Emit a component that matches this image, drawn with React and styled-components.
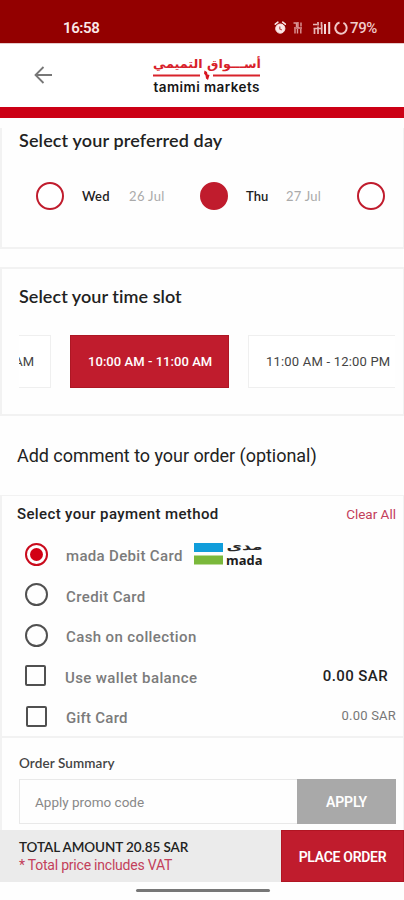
import React from "react";
import styled, { createGlobalStyle } from "styled-components";

const Global = createGlobalStyle`
  *{box-sizing:border-box}
  html,body{margin:0;padding:0;background:#fefefe}
  body{width:404px;height:900px;overflow:hidden;font-family:Roboto,"Liberation Sans",sans-serif}
  button{border:0;padding:0;margin:0;cursor:pointer}
`;

const Screen = styled.main`
  width: 404px;
  height: 900px;
  display: flex;
  flex-direction: column;
  overflow: hidden;
`;
const Label = styled.span`
  display: block;
  white-space: nowrap;
  font-family: ${(p) => (p.$lato ? 'Lato, "Liberation Sans", sans-serif' : 'Roboto, "Liberation Sans", sans-serif')};
  font-size: ${(p) => p.$size || 15}px;
  font-weight: ${(p) => p.$weight || 400};
  font-variant-ligatures: none;
  line-height: ${(p) => p.$lh || 20}px;
  color: ${(p) => p.$color || "#222"};
  letter-spacing: ${(p) => p.$ls || 0}px;
`;
const StatusBar = styled.header`
  flex: 0 0 43px;
  background: #930000;
  display: flex;
  justify-content: space-between;
  align-items: flex-start;
  padding: 18px 27px 0 63px;
`;
const StatusIcons = styled.div`
  display: flex;
  align-items: center;
`;
const AppBar = styled.nav`
  flex: 0 0 64px;
  background: #fff;
  display: flex;
  align-items: flex-start;
  padding: 11px 0 0 33px;
  border-top: 1px solid #e5caca;
`;
const BackButton = styled.button`
  width: 20px;
  height: 40px;
  background: none;
  display: flex;
  align-items: center;
`;
const BrandLogo = styled.svg`
  margin-left: 98px;
  display: block;
`;
const CardLogo = styled.svg`
  display: block;
  overflow: visible;
`;
const Strip = styled.div`
  flex: 0 0 11px;
  background: #cc0015;
`;
const Card = styled.section`
  flex: 0 0 ${(p) => p.$h}px;
  margin-top: ${(p) => p.$gap || 0}px;
  border: solid #f2f2f2;
  border-width: ${(p) => p.$bw || "2px 1px 2px 2px"};
  background: #fefefe;
  overflow: hidden;
`;
const CardTitle = styled.div`
  padding: ${(p) => p.$top}px 0 0 17px;
`;
const DayRow = styled.div`
  display: grid;
  grid-template-columns: 46px 47px 71px 46px 40px 71px 28px;
  align-items: center;
  height: 28px;
  padding-left: 34px;
  margin-top: 32px;
`;
const DayDot = styled.span`
  width: 28px;
  height: 28px;
  border-radius: 50%;
  border: 2px solid #c01c2d;
  background: ${(p) => (p.$on ? "#c01c2d" : "#fff")};
`;
const SlotRow = styled.div`
  display: flex;
  margin: 29px 8px 0 17px;
  height: 53px;
  gap: 19px;
  overflow: hidden;
`;
const Slot = styled.button`
  flex: 0 0 ${(p) => p.$w}px;
  border: 1px solid ${(p) => (p.$on ? "#ad1724" : "#efefef")};
  border-left-width: ${(p) => (p.$cut ? 0 : 1)}px;
  background: ${(p) => (p.$on ? "#c01c2d" : "#fff")};
  overflow: hidden;
  display: flex;
  align-items: center;
  justify-content: ${(p) => (p.$cut ? "flex-end" : "flex-start")};
  padding: 1px ${(p) => (p.$cut ? 16 : 0)}px 0 ${(p) => (p.$cut ? 0 : 17)}px;
`;
const CommentTitle = styled.div`
  flex: 0 0 79px;
  display: flex;
  align-items: center;
  padding-left: 17px;
`;
const PayHead = styled.div`
  display: flex;
  justify-content: space-between;
  padding: 8px 7px 0 15px;
  height: 38px;
`;
const PayRow = styled.label`
  display: grid;
  grid-template-columns: ${(p) => p.$col || 41}px auto 1fr;
  align-items: center;
  height: 40.5px;
  padding: 0 ${(p) => p.$right || 7}px 0 23px;
`;
const PayLabel = styled.div`
  padding-top: 4px;
`;
const PayEnd = styled.div`
  justify-self: ${(p) => (p.$start ? "start" : "end")};
  padding-left: ${(p) => (p.$start ? 11 : 0)}px;
`;
const Radio = styled.span`
  width: 23px;
  height: 23px;
  border-radius: 50%;
  border: 2px solid ${(p) => (p.$on ? "#c90a1c" : "#505050")};
  display: grid;
  place-items: center;
  &::after {
    content: "";
    width: 13px;
    height: 13px;
    border-radius: 50%;
    background: ${(p) => (p.$on ? "#d20014" : "transparent")};
  }
`;
const Checkbox = styled.span`
  width: 21px;
  height: 21px;
  margin-left: ${(p) => p.$inset || 0}px;
  border-radius: 2px;
  border: 2px solid #505050;
`;
const Promo = styled.div`
  display: flex;
  height: 45px;
  margin: 6px 7px 0 17px;
`;
const PromoField = styled.div`
  flex: 1;
  border: 1px solid #e9e9e9;
  border-right: 0;
  display: flex;
  align-items: center;
  padding-left: 15px;
`;
const ApplyButton = styled.button`
  width: 99px;
  background: #a9a9a9;
  display: grid;
  place-items: center;
`;
const Footer = styled.footer`
  flex: 0 0 52px;
  display: flex;
  background: #ebebeb;
`;
const Total = styled.div`
  flex: 1;
  padding: 8px 0 0 19px;
`;
const OrderButton = styled.button`
  width: 123px;
  background: #c01c2d;
  border: 1px solid #b01522;
  display: grid;
  place-items: center;
  padding-top: 2px;
`;
const HomeBar = styled.div`
  flex: 0 0 3px;
  width: 134px;
  margin: 7px 0 0 136px;
  border-radius: 2px;
  background: #777;
`;

const StatusGlyphs = () => (
  <svg width="76" height="16" viewBox="274 20 76 16" fill="none">
    <circle cx="280.3" cy="28.6" r="4.600" fill="#fbe6e6" stroke="#fbe6e6" />
    <path d="M275.3 24.2l2.6-2M285.3 24.2l-2.6-2" stroke="#fbe6e6" strokeWidth="1.6" strokeLinecap="round" />
    <path d="M279.800 26.500v2.500l2 1" stroke="#b84848" strokeWidth="1.2" />
    <path d="M293.500 23h3v4M298 22v6M301 22.500v4M295 29v4.500M297.500 29v4.500M300.800 29v4.500M294 28h8" stroke="#dc9898" strokeWidth="1.400" />
    <path d="M313 24.500h4M318 22v3.500M321.500 22v4M313.500 28.500h8M314.500 29v5M318 26.500v7.500M321.700 25v9" stroke="#e6b5b5" strokeWidth="1.700" />
    <path d="M325 24v10M329.200 22v12" stroke="#f5dada" strokeWidth="2" />
    <circle cx="341" cy="28" r="5.700" stroke="#f0c6c6" strokeWidth="2" strokeDasharray="31 5" transform="rotate(-65 341 28)" />
  </svg>
);

const TamimiLogo = () => (
  <BrandLogo width="112" height="42" viewBox="151 55 112 42">
    <text x="261" y="67.500" direction="rtl" textLength="108" lengthAdjust="spacingAndGlyphs" fontFamily="DejaVu Sans, sans-serif" fontWeight="700" fontSize="12" fill="#d8202a">أســـواق التميمي</text>
    <path d="M153 75.500h47M213 75.500h47" stroke="#d8232b" strokeWidth="1.800" />
    <path d="M204.500 70.500l2.500 1.500 .5 2.500 2 .5-1.500 5-2-1.500-.5-3-1.500-2z" fill="#d8151f" />
    <text x="153.500" y="91.500" textLength="106" lengthAdjust="spacing" fontFamily="Inter, sans-serif" fontWeight="600" fontSize="13.500" fill="#161616">tamimi markets</text>
  </BrandLogo>
);

const MadaLogo = () => (
  <CardLogo width="70" height="26" viewBox="194 541 70 26">
    <path d="M194 543h29v9h-29z" fill="#109ddb" />
    <path d="M194 555.500h29v9h-29z" fill="#7ab83b" />
    <text x="262.500" y="549.500" direction="rtl" textLength="36" lengthAdjust="spacingAndGlyphs" fontFamily="DejaVu Sans, sans-serif" fontWeight="700" fontSize="10.500" fill="#292929">مدى</text>
    <text x="226" y="564.500" textLength="36.500" lengthAdjust="spacingAndGlyphs" fontFamily="Open Sans, sans-serif" fontWeight="700" fontSize="13" fill="#1c1c1c">mada</text>
  </CardLogo>
);

const Pay = ({ text, box, on, col, inset, right, children, start, ls = 0.38 }) => (
  <PayRow $col={col} $right={right}>
    {box ? <Checkbox $inset={inset} /> : <Radio $on={on} />}
    <PayLabel><Label $size={15} $weight={500} $color="#7b7b7b" $ls={ls}>{text}</Label></PayLabel>
    {children && <PayEnd $start={start}>{children}</PayEnd>}
  </PayRow>
);

export default function App() {
  return (
    <Screen>
      <Global />
      <StatusBar>
        <Label $size={15} $weight={600} $color="#fbe9e9" $ls={-0.4}>16:58</Label>
        <StatusIcons>
          <StatusGlyphs />
          <Label $size={15} $weight={500} $color="#f0cccc" $ls={-0.4}>79%</Label>
        </StatusIcons>
      </StatusBar>
      <AppBar>
        <BackButton aria-label="Back">
          <svg width="20" height="18" viewBox="0 0 20 18" fill="none" stroke="#777" strokeWidth="1.800"><path d="M19 9H3M10.500 1L2.500 9l8 8" /></svg>
        </BackButton>
        <TamimiLogo />
      </AppBar>
      <Strip />

      <Card $h={121} $gap={10} $bw="0 1px 2px 2px">
        <CardTitle $top={2}><Label $lato $size={18} $weight={600} $ls={0.14}>Select your preferred day</Label></CardTitle>
        <DayRow>
          <DayDot />
          <Label $lato $size={13} $weight={600} $ls={0.3}>Wed</Label>
          <Label $lato $size={13} $color="#aaa" $ls={0.35}>26 Jul</Label>
          <DayDot $on />
          <Label $lato $size={13} $weight={600} $ls={0.1}>Thu</Label>
          <Label $lato $size={13} $color="#aaa" $ls={0.25}>27 Jul</Label>
          <DayDot />
        </DayRow>
      </Card>

      <Card $h={149} $gap={18}>
        <CardTitle $top={17}><Label $lato $size={18} $weight={600} $ls={0.05}>Select your time slot</Label></CardTitle>
        <SlotRow>
          <Slot $w={32} $cut><Label $size={13} $color="#444">AM</Label></Slot>
          <Slot $w={159} $on><Label $size={13} $weight={500} $color="#fff" $ls={0.05}>10:00 AM - 11:00 AM</Label></Slot>
          <Slot $w={160}><Label $size={13} $color="#444" $ls={0.2}>11:00 AM - 12:00 PM</Label></Slot>
        </SlotRow>
      </Card>

      <CommentTitle><Label $size={18} $ls={-0.04}>Add comment to your order (optional)</Label></CommentTitle>

      <Card $h={243} $bw="1px 1px 2px 2px">
        <PayHead>
          <Label $size={15} $weight={500} $ls={0.37}>Select your payment method</Label>
          <Label $size={13.5} $color="#c3405a">Clear All</Label>
        </PayHead>
        <Pay text="mada Debit Card" on start ls={0.33}><MadaLogo /></Pay>
        <Pay text="Credit Card" />
        <Pay text="Cash on collection" />
        <Pay text="Use wallet balance" box col={40} right={15}><Label $size={15} $weight={500} $ls={0.4}>0.00 SAR</Label></Pay>
        <Pay text="Gift Card" box inset={1} ls={0.25}><Label $size={13} $color="#777" $ls={0.2}>0.00 SAR</Label></Pay>
      </Card>

      <Card $h={92} $bw="0 1px 0 2px">
        <CardTitle $top={15}><Label $lato $size={13.5} $weight={600} $color="#444" $ls={0.1}>Order Summary</Label></CardTitle>
        <Promo>
          <PromoField><Label $size={13.5} $color="#888">Apply promo code</Label></PromoField>
          <ApplyButton><Label $size={14} $weight={600} $color="#fff" $ls={-0.15}>APPLY</Label></ApplyButton>
        </Promo>
      </Card>

      <Footer>
        <Total>
          <Label $lato $size={13.5} $weight={600} $lh={18} $ls={-0.08}>TOTAL AMOUNT 20.85 SAR</Label>
          <Label $size={14} $lh={18} $color="#c3405a" $ls={-0.22}>* Total price includes VAT</Label>
        </Total>
        <OrderButton><Label $size={14} $weight={600} $color="#fff" $ls={-0.3}>PLACE ORDER</Label></OrderButton>
      </Footer>
      <HomeBar />
    </Screen>
  );
}
